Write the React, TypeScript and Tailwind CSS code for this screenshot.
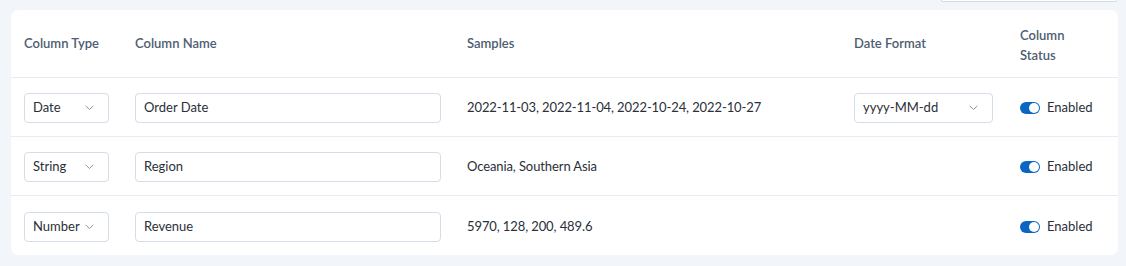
import React from "react";

type Row = {
  type: string;
  name: string;
  samples: string;
  dateFormat?: string;
};

const rows: Row[] = [
  {
    type: "Date",
    name: "Order Date",
    samples: "2022-11-03, 2022-11-04, 2022-10-24, 2022-10-27",
    dateFormat: "yyyy-MM-dd",
  },
  { type: "String", name: "Region", samples: "Oceania, Southern Asia" },
  { type: "Number", name: "Revenue", samples: "5970, 128, 200, 489.6" },
];

const Chevron = () => (
  <svg width="9" height="6" viewBox="0 0 9 6" fill="none" className="shrink-0">
    <path d="M1 1.2L4.5 4.5L8 1.2" stroke="#8a94a6" strokeWidth="1" strokeLinecap="round" strokeLinejoin="round" />
  </svg>
);

const SelectBox = ({ value, width }: { value: string; width: string }) => (
  <div
    className={`flex items-center justify-between h-[30px] ${width} rounded-[4px] border border-[#d5dde9] bg-white pl-[8px] pr-[14px] text-[13px] text-[#2a2f38]`}
  >
    <span>{value}</span>
    <Chevron />
  </div>
);

const Toggle = () => (
  <div className="relative w-[20px] h-[12px] rounded-full bg-[#0a66c2]">
    <div className="absolute right-[1px] top-[1px] w-[10px] h-[10px] rounded-full bg-white" />
  </div>
);

const cols = "grid grid-cols-[111px_332px_387px_166px_1fr] pl-[13px] items-center";

export default function App() {
  return (
    <div className="w-[1126px] h-[266px] bg-[#f2f5f9] font-['Lato',sans-serif]">
      <div className="flex justify-end pr-[9px]">
        <div className="w-[176px] h-[2px] bg-white border-x border-b border-[#d3d9e3] rounded-b-[3px]" />
      </div>

      <div className="mt-[8px] ml-[11px] w-[1107px] bg-white rounded-[7px]">
        {/* Header */}
        <div className={`${cols} h-[68px] border-b border-[#e8ebf1] text-[13px] font-semibold text-[#4e5d72]`}>
          <div>Column Type</div>
          <div>Column Name</div>
          <div>Samples</div>
          <div>Date Format</div>
          <div className="w-[60px] leading-[20px] pt-[3px]">Column Status</div>
        </div>

        {/* Rows */}
        {rows.map((row, i) => (
          <div
            key={i}
            className={`${cols} h-[59px] pt-[2px] text-[13px] text-[#2a2f38] ${
              i < rows.length - 1 ? "border-b border-[#e8ebf1]" : ""
            }`}
          >
            <SelectBox value={row.type} width="w-[85px]" />
            <div className="flex items-center h-[30px] w-[306px] rounded-[4px] border border-[#d5dde9] px-[8px]">
              {row.name}
            </div>
            <div className="tracking-[-0.1px]">{row.samples}</div>
            <div>{row.dateFormat && <SelectBox value={row.dateFormat} width="w-[139px]" />}</div>
            <div className="flex items-center gap-[7px]">
              <Toggle />
              <span>Enabled</span>
            </div>
          </div>
        ))}
      </div>
    </div>
  );
}
